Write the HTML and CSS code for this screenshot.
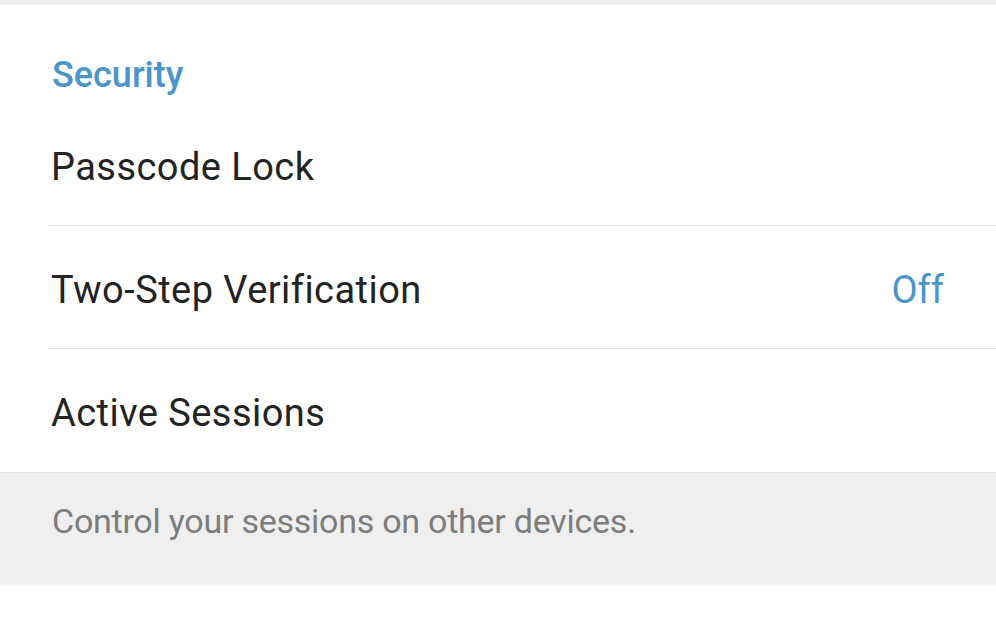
FILE: index.html
```html
<!DOCTYPE html>
<html lang="en">
<head>
<meta charset="utf-8">
<title>Security</title>
<link rel="stylesheet" href="styles.css">
</head>
<body>
  <div class="topstrip"></div>
  <section class="card">
    <h2 class="card-title">Security</h2>
    <div class="row">
      <span class="row-label">Passcode Lock</span>
    </div>
    <div class="row">
      <span class="row-label">Two-Step Verification</span>
      <span class="row-value">Off</span>
    </div>
    <div class="row row-last">
      <span class="row-label">Active Sessions</span>
    </div>
  </section>
  <div class="hint">Control your sessions on other devices.</div>
  <div class="after"></div>
</body>
</html>
```

FILE: styles.css
```css
html, body {
  margin: 0;
  padding: 0;
  background: #ffffff;
  font-family: Roboto, "Noto Sans", "Liberation Sans", sans-serif;
}

.topstrip {
  height: 5px;
  background: #eeeeee;
  border-bottom: 1px solid #f6f6f6;
  box-sizing: border-box;
}

.card {
  background: #ffffff;
}

.card-title {
  margin: 0;
  padding: 50px 0 9px 52px;
  height: 99px;
  box-sizing: border-box;
  font-size: 36px;
  line-height: 40px;
  font-weight: 500;
  color: #4a95c9;
}

.row {
  height: 123px;
  box-sizing: border-box;
  padding: 4px 52px 0 51px;
  display: flex;
  align-items: center;
  justify-content: space-between;
  border-bottom: 1px solid transparent;
  background-image: linear-gradient(#e4e4e4, #e4e4e4);
  background-repeat: no-repeat;
  background-size: calc(100% - 48px) 1px;
  background-position: 48px 100%;
}

.row-last {
  background-image: none;
  height: 122px;
  border-bottom: none;
}

.row-label {
  font-size: 38px;
  line-height: 44px;
  letter-spacing: 0.45px;
  color: #232323;
}

.row-value {
  font-size: 38px;
  line-height: 44px;
  color: #4a95c9;
}

.hint {
  background: #efefef;
  border-top: 1px solid #e3e3e3;
  height: 112px;
  box-sizing: border-box;
  padding: 28px 0 0 52px;
  font-size: 34px;
  line-height: 40px;
  letter-spacing: -0.25px;
  color: #7d7d7d;
}

.after {
  height: 36px;
  border-top: 1px solid #f7f7f7;
  background: #ffffff;
}
```
